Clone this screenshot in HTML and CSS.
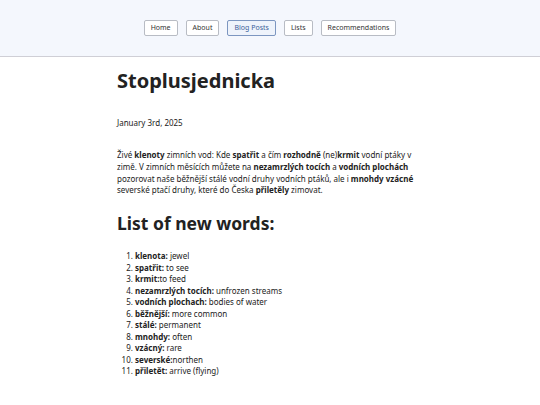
FILE: index.html
```html
<!DOCTYPE html>
<html lang="cs">
<head>
<meta charset="utf-8">
<title>Stoplusjednicka</title>
<link rel="stylesheet" href="styles.css">
</head>
<body>
<header class="site-header">
  <nav class="nav">
    <a class="nav-btn" href="#">Home</a>
    <a class="nav-btn" href="#">About</a>
    <a class="nav-btn active" href="#">Blog Posts</a>
    <a class="nav-btn" href="#">Lists</a>
    <a class="nav-btn" href="#">Recommendations</a>
  </nav>
</header>
<main class="content">
  <h1 class="title">Stoplusjednicka</h1>
  <p class="date">January 3rd, 2025</p>
  <p class="text">Živé <b>klenoty</b> zimních vod: Kde <b>spatřit</b> a čím <b>rozhodně</b> (ne)<b>krmit</b> vodní ptáky v zimě. V zimních měsících můžete na <b>nezamrzlých tocích</b> a <b>vodních plochách</b> pozorovat naše běžnější stálé vodní druhy vodních ptáků, ale i <b>mnohdy vzácné</b> severské ptačí druhy, které do Česka <b>přiletěly</b> zimovat.</p>
  <h2 class="subtitle">List of new words:</h2>
  <ol class="words">
    <li><b>klenota:</b> jewel</li>
    <li><b>spatřit:</b> to see</li>
    <li><b>krmit:</b>to feed</li>
    <li><b>nezamrzlých tocích:</b> unfrozen streams</li>
    <li><b>vodních plochach:</b> bodies of water</li>
    <li><b>běžnější:</b> more common</li>
    <li><b>stálé:</b> permanent</li>
    <li><b>mnohdy:</b> often</li>
    <li><b>vzácný:</b> rare</li>
    <li><b>severské:</b>northen</li>
    <li><b>přiletět:</b> arrive (flying)</li>
  </ol>
</main>
</body>
</html>
```

FILE: styles.css
```css
html, body {
  margin: 0;
  padding: 0;
  background: #ffffff;
}
body {
  font-family: "Noto Sans", "Open Sans", sans-serif;
  color: #222;
}
b {
  font-weight: 700;
}
.site-header {
  background: #f4f7fd;
  border-bottom: 1px solid #cfcfd6;
  height: 57px;
  box-sizing: border-box;
  display: flex;
  align-items: center;
  justify-content: center;
}
.nav {
  display: flex;
  gap: 8px;
}
.nav-btn {
  display: block;
  font-size: 7px;
  line-height: 14px;
  padding: 0 6px;
  color: #333;
  text-decoration: none;
  background: #fff;
  border: 1px solid #b8bcc4;
  border-radius: 2px;
}
.nav-btn.active {
  color: #3b5f9a;
  background: #eef3fb;
  border-color: #7c96c0;
}
.content {
  width: 300px;
  margin: 0 auto;
  padding-right: 6px;
}
.title {
  font-size: 20px;
  font-weight: 700;
  margin: 11px 0 0;
  line-height: 26px;
}
.date {
  font-size: 8px;
  line-height: 12px;
  margin: 23px 0 0;
}
.text {
  font-size: 8px;
  line-height: 11.8px;
  margin: 20px 0 0;
}
.subtitle {
  font-size: 17.5px;
  font-weight: 700;
  line-height: 24px;
  margin: 15px 0 0;
}
.words {
  font-size: 8px;
  line-height: 11.5px;
  margin: 15px 0 0;
  padding-left: 18px;
}
```
